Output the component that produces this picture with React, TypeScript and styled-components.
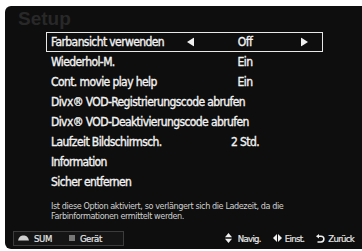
import React from "react";
import styled, { createGlobalStyle } from "styled-components";

const Global = createGlobalStyle`
  html, body { margin: 0; padding: 0; background: #ffffff; }
  body { font-family: "DejaVu Sans Condensed", "Liberation Sans Narrow", "Roboto", sans-serif; }
`;

const Panel = styled.div`
  margin: 6px 0 0 5px;
  width: 357px;
  height: 243px;
  background: #0e0e0e;
  border-radius: 6px 0 0 6px;
  display: flex;
  flex-direction: column;
  box-sizing: border-box;
  overflow: hidden;
`;

const Title = styled.div`
  height: 26px;
  padding-left: 13px;
  font-family: "Liberation Sans", Arial, sans-serif;
  font-weight: bold;
  font-size: 19px;
  line-height: 26px;
  color: #282828;
`;

const Menu = styled.div`
  margin-left: 41px;
  width: 277px;
  display: flex;
  flex-direction: column;
`;

const Row = styled.div<{ $selected?: boolean }>`
  height: 20px;
  box-sizing: border-box;
  display: grid;
  grid-template-columns: 136px 121px;
  align-items: center;
  padding-left: 4px;
  border: 1.5px solid ${(p) => (p.$selected ? "#e8e8e8" : "transparent")};
  color: #f2f2f2;
  font-size: 12px;
  letter-spacing: -0.6px;
  -webkit-text-stroke: 0.35px #f2f2f2;
  white-space: nowrap;
`;

const Label = styled.span``;

const Value = styled.span`
  display: flex;
  align-items: center;
  justify-content: center;
  position: relative;
  height: 100%;
  padding-right: 5px;
`;

const Arrow = styled.span<{ $side: "left" | "right" }>`
  position: absolute;
  ${(p) => (p.$side === "left" ? "left: 0px;" : "right: 0px;")}
  top: 50%;
  transform: translateY(-50%);
  display: flex;
`;

const Desc = styled.div`
  margin: 9px 0 0 46px;
  font-size: 9px;
  line-height: 10px;
  letter-spacing: -0.4px;
  color: #d0d0d0;
`;

const Footer = styled.div`
  margin-top: auto;
  height: 22px;
  display: flex;
  align-items: center;
  padding: 0 8px 0 8px;
`;

const KeyBox = styled.div`
  width: 111px;
  height: 15px;
  box-sizing: border-box;
  border: 1px solid #3c3c3c;
  background: #151515;
  display: flex;
  align-items: center;
  padding-left: 4px;
  gap: 5px;
  color: #e6e6e6;
  font-size: 9.5px;
  letter-spacing: -0.4px;
  -webkit-text-stroke: 0.2px #e6e6e6;
`;

const Square = styled.span`
  width: 6px;
  height: 6px;
  background: #777;
  margin-left: 12px;
`;

const Hints = styled.div`
  margin-left: auto;
  display: flex;
  align-items: center;
  gap: 12px;
  color: #e6e6e6;
  font-size: 9.5px;
  letter-spacing: -0.7px;
  -webkit-text-stroke: 0.2px #e6e6e6;
`;

const Hint = styled.span<{ $gap?: number }>`
  display: flex;
  align-items: center;
  gap: ${(p) => p.$gap ?? 3}px;
`;

const Tri = ({ dir }: { dir: "left" | "right" }) => (
  <svg width="7" height="9" viewBox="0 0 7 9">
    {dir === "left" ? (
      <polygon points="7,0 7,9 0,4.5" fill="#f0f0f0" />
    ) : (
      <polygon points="0,0 0,9 7,4.5" fill="#f0f0f0" />
    )}
  </svg>
);

const SumIcon = () => (
  <svg width="11" height="6" viewBox="0 0 11 6">
    <path d="M0 5.5 C1 1.5 3 0.5 5.5 0.5 C8 0.5 10 1.5 11 5.5 Z" fill="#cfcfcf" />
  </svg>
);

const UpDown = () => (
  <svg width="7" height="10" viewBox="0 0 7 10">
    <polygon points="3.5,0 7,4.2 0,4.2" fill="#f0f0f0" />
    <polygon points="0,5.8 7,5.8 3.5,10" fill="#f0f0f0" />
  </svg>
);

const LeftRight = () => (
  <svg width="9" height="8" viewBox="0 0 9 8">
    <polygon points="4,0 4,8 0,4" fill="#f0f0f0" />
    <polygon points="5,0 5,8 9,4" fill="#f0f0f0" />
  </svg>
);

const Back = () => (
  <svg width="9" height="9" viewBox="0 0 9 9">
    <path d="M2.5 2.2 H5 A2.9 2.9 0 0 1 5 8 H1.5" fill="none" stroke="#f0f0f0" strokeWidth="1.5" />
    <polygon points="0,2.2 3,0 3,4.4" fill="#f0f0f0" />
  </svg>
);

const items: { label: string; value?: string; selected?: boolean }[] = [
  { label: "Farbansicht verwenden", value: "Off", selected: true },
  { label: "Wiederhol-M.", value: "Ein" },
  { label: "Cont. movie play help", value: "Ein" },
  { label: "Divx® VOD-Registrierungscode abrufen" },
  { label: "Divx® VOD-Deaktivierungscode abrufen" },
  { label: "Laufzeit Bildschirmsch.", value: "2 Std." },
  { label: "Information" },
  { label: "Sicher entfernen" },
];

export default function App() {
  return (
    <>
      <Global />
      <Panel>
        <Title>Setup</Title>
        <Menu>
          {items.map((it) => (
            <Row key={it.label} $selected={it.selected}>
              <Label>{it.label}</Label>
              {it.value !== undefined && (
                <Value>
                  {it.selected && (
                    <Arrow $side="left">
                      <Tri dir="left" />
                    </Arrow>
                  )}
                  {it.value}
                  {it.selected && (
                    <Arrow $side="right">
                      <Tri dir="right" />
                    </Arrow>
                  )}
                </Value>
              )}
            </Row>
          ))}
        </Menu>
        <Desc>
          Ist diese Option aktiviert, so verlängert sich die Ladezeit, da die
          <br />
          Farbinformationen ermittelt werden.
        </Desc>
        <Footer>
          <KeyBox>
            <SumIcon />
            SUM
            <Square />
            Gerät
          </KeyBox>
          <Hints>
            <Hint $gap={6}>
              <UpDown />
              Navig.
            </Hint>
            <Hint>
              <LeftRight />
              Einst.
            </Hint>
            <Hint>
              <Back />
              Zurück
            </Hint>
          </Hints>
        </Footer>
      </Panel>
    </>
  );
}
